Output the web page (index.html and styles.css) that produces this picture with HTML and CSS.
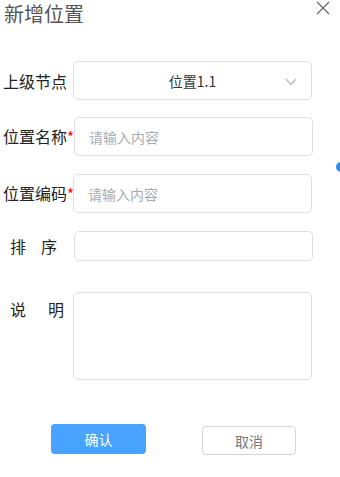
FILE: index.html
```html
<!DOCTYPE html>
<html lang="zh-CN">
<head>
    <meta charset="UTF-8">
    <meta name="viewport" content="width=device-width, initial-scale=1.0">
    <title>新增位置</title>
    <link rel="stylesheet" href="styles.css">
</head>
<body>
    <div class="dialog">
        <div class="dialog-header">
            <span class="dialog-title">新增位置</span>
            <button class="close-btn" aria-label="关闭">
                <svg width="14" height="14" viewBox="0 0 14 14">
                    <path d="M1 1 L13 13 M13 1 L1 13" stroke="#666" stroke-width="1.2" fill="none"/>
                </svg>
            </button>
        </div>
        <div class="form">
            <div class="form-row row-parent">
                <label class="form-label">上级节点</label>
                <div class="field select">
                    <span class="select-value">位置1.1</span>
                    <svg class="chevron" width="12" height="8" viewBox="0 0 12 8">
                        <path d="M1 1 L6 6.5 L11 1" stroke="#b4b8c0" stroke-width="1.2" fill="none"/>
                    </svg>
                </div>
            </div>
            <div class="form-row row-name">
                <label class="form-label">位置名称<span class="required">*</span></label>
                <input class="field input" type="text" placeholder="请输入内容">
            </div>
            <div class="form-row row-code">
                <label class="form-label">位置编码<span class="required">*</span></label>
                <input class="field input" type="text" placeholder="请输入内容">
            </div>
            <div class="form-row row-sort">
                <label class="form-label spaced-sort"><span>排</span><span>序</span></label>
                <input class="field input short" type="text">
            </div>
            <div class="form-row row-desc">
                <label class="form-label spaced-desc"><span>说</span><span>明</span></label>
                <textarea class="field textarea"></textarea>
            </div>
        </div>
        <div class="dialog-footer">
            <button class="btn btn-primary">确认</button>
            <button class="btn btn-default">取消</button>
        </div>
    </div>
    <div class="side-dot"></div>
</body>
</html>
```

FILE: styles.css
```css
body {
    margin: 0;
    background-color: #fff;
    font-family: "Noto Sans CJK SC", "Liberation Sans", sans-serif;
    color: #333;
    overflow: hidden;
}
.dialog {
    position: relative;
    width: 340px;
    height: 477px;
}
.dialog-header {
    height: 26px;
    padding-top: 2px;
    padding-left: 4px;
}
.dialog-title {
    display: inline-block;
    font-size: 20px;
    line-height: 24px;
    color: #555;
}
.close-btn {
    position: absolute;
    top: 1px;
    right: 10px;
    width: 14px;
    height: 14px;
    padding: 0;
    border: none;
    background: none;
    cursor: pointer;
}
.close-btn svg {
    display: block;
}
.form {
    padding-top: 33px;
}
.form-row {
    display: flex;
    align-items: center;
}
.row-name {
    margin-top: 17px;
}
.row-code {
    margin-top: 18px;
}
.row-sort {
    margin-top: 18px;
}
.row-desc {
    margin-top: 31px;
    align-items: flex-start;
}
.form-label {
    width: 70px;
    padding-left: 3px;
    font-size: 16px;
    line-height: 20px;
    color: #222;
    white-space: nowrap;
}
.required {
    color: #f00;
    font-size: 15px;
}
.spaced-sort {
    display: flex;
    gap: 15px;
    padding-left: 10px;
    width: 63px;
}
.spaced-desc {
    display: flex;
    gap: 22px;
    padding-left: 10px;
    width: 63px;
    margin-top: 7px;
}
.field {
    box-sizing: border-box;
    width: 239px;
    border: 1px solid #dcdfe6;
    border-radius: 5px;
    background: #fff;
    font-family: inherit;
    outline: none;
}
.select {
    height: 39px;
    display: flex;
    align-items: center;
    justify-content: center;
    position: relative;
}
.select-value {
    font-size: 14px;
    color: #333;
}
.chevron {
    position: absolute;
    right: 14px;
    top: 16px;
}
.input {
    height: 39px;
    padding: 0 14px;
    font-size: 14px;
    color: #333;
}
.input::placeholder {
    color: #a8abb2;
}
.row-name .input {
    margin-left: 1px;
}
.short {
    height: 30px;
    margin-left: 1px;
}
.textarea {
    height: 88px;
    resize: none;
}
.dialog-footer {
    display: flex;
    align-items: flex-start;
    padding-left: 51px;
    margin-top: 44px;
    gap: 56px;
}
.btn {
    width: 95px;
    height: 30px;
    border-radius: 4px;
    font-family: inherit;
    font-size: 14px;
    cursor: pointer;
}
.btn-primary {
    background-color: #48a2ff;
    border: none;
    color: #fff;
}
.btn-default {
    margin-top: 2px;
    width: 94px;
    height: 29px;
    background-color: #fff;
    border: 1px solid #d4d4d4;
    color: #777;
}
.side-dot {
    position: absolute;
    top: 162px;
    left: 336px;
    width: 10px;
    height: 10px;
    border-radius: 50%;
    background-color: #2d8cf0;
}
```
